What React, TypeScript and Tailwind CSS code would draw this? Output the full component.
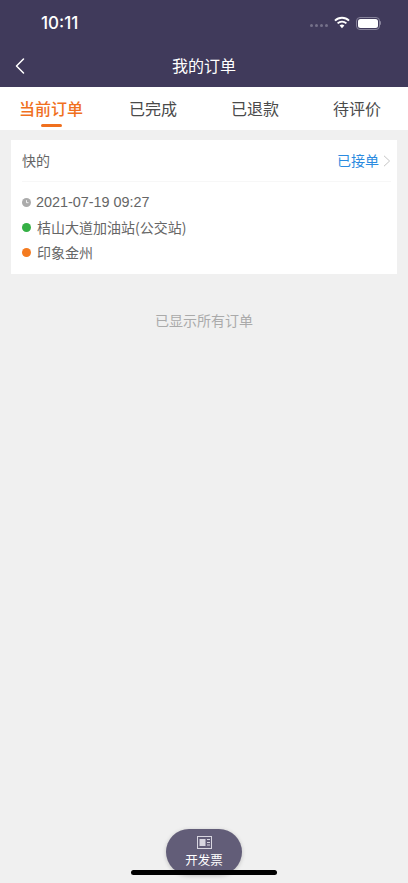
import { ChevronLeft } from 'lucide-react';

const TABS = ['当前订单', '已完成', '已退款', '待评价'];
const CJK = "font-['Noto_Sans_CJK_SC','Liberation_Sans',sans-serif]";

function StatusBar() {
  return (
    <div className="h-[47px] pl-[41px] pr-[27px] flex items-center justify-between text-white">
      <span className="text-[17px] font-medium font-['Inter',sans-serif] leading-none">10:11</span>
      <div className="flex items-center">
        <div className="flex gap-[2px] mr-[6px] mt-[3px]">
          {[0, 1, 2, 3].map(i => (
            <span key={i} className="w-[3px] h-[3px] rounded-full bg-[#75718a]" />
          ))}
        </div>
        <svg width="16" height="13" viewBox="0 0 17 13" className="mr-[6px] mb-[2px]">
          <path d="M1 4.5a10.8 10.8 0 0 1 15 0" fill="none" stroke="white" strokeWidth="2" />
          <path d="M3.8 7.4a6.8 6.8 0 0 1 9.4 0" fill="none" stroke="white" strokeWidth="2" />
          <path d="M6 9.8a3.6 3.6 0 0 1 5 0L8.5 12.6z" fill="white" />
        </svg>
        <div className="w-[24px] h-[13px] rounded-[4px] border border-[#86829a] p-[1px] mb-[1px]">
          <div className="w-full h-full rounded-[2.5px] bg-white" />
        </div>
        <span className="w-[1.5px] h-[4px] bg-[#86829a] rounded-r-sm mb-[1px]" />
      </div>
    </div>
  );
}

function Tabs() {
  return (
    <div className="h-[43px] bg-white grid grid-cols-4">
      {TABS.map((tab, i) => (
        <div key={tab} className="relative pt-[8px] text-center">
          <span className={i === 0 ? 'text-[16px] leading-[26px] font-medium text-[#f0701e] block' : 'text-[16px] leading-[26px] text-[#4a4a4a] block'}>
            {tab}
          </span>
          {i === 0 && <span className="absolute left-[41px] top-[37px] w-[21px] h-[3px] rounded-full bg-[#f0701e]" />}
        </div>
      ))}
    </div>
  );
}

function OrderCard() {
  return (
    <div className="mx-[11px] mt-[10px] bg-white">
      <div className="ml-[11px] mr-[6px] h-[42px] flex items-center justify-between border-b border-[#f7f7f7]">
        <span className="text-[14px] text-[#666666]">快的</span>
        <div className="flex items-center gap-[4px] text-[#2b8be0] text-[14px]">
          已接单
          <svg width="8" height="12" viewBox="0 0 8 12" className="mt-[1px]">
            <path d="M1 0.8 6.6 6 1 11.2" fill="none" stroke="#c4c4c4" strokeWidth="1" />
          </svg>
        </div>
      </div>
      <div className="px-[11px] pt-[7px] pb-[9px] flex flex-col text-[14px] text-[#666666]">
        <div className="h-[26px] flex items-center gap-[5px]">
          <svg width="9" height="9" viewBox="0 0 9 9">
            <circle cx="4.5" cy="4.5" r="4.5" fill="#ababab" />
            <path d="M4.5 2.2v2.5h2" fill="none" stroke="white" strokeWidth="0.8" />
          </svg>
          <span className="font-['Liberation_Sans',sans-serif] text-[14.4px] pt-[1px]">2021-07-19 09:27</span>
        </div>
        <div className="h-[25px] flex items-center gap-[6px]">
          <span className="w-[9px] h-[9px] rounded-full bg-[#35b045]" />
          <span>桔山大道加油站(公交站)</span>
        </div>
        <div className="h-[25px] flex items-center gap-[6px]">
          <span className="w-[9px] h-[9px] rounded-full bg-[#f47b20]" />
          <span>印象金州</span>
        </div>
      </div>
    </div>
  );
}

export default function App() {
  return (
    <div className={`relative w-[408px] h-[883px] overflow-hidden bg-[#f0f0f0] ${CJK}`}>
      <div className="bg-[#403a5b]">
        <StatusBar />
        <div className="relative h-[40px] pb-[4px] flex items-center justify-center text-white text-[16px]">
          <ChevronLeft size={28} strokeWidth={1.3} className="absolute left-[6px] top-[5px]" />
          我的订单
        </div>
      </div>
      <Tabs />
      <OrderCard />
      <p className="mt-[36px] text-center text-[14px] leading-[20px] text-[#aaaaaa]">已显示所有订单</p>

      <div className="absolute left-[166px] top-[829px] w-[76px] h-[46px] rounded-full bg-[#625d78] shadow-[0_1px_4px_rgba(0,0,0,0.2)] flex flex-col items-center pt-[7px]">
        <svg width="15" height="13" viewBox="0 0 15 13">
          <rect x="0.5" y="0.5" width="14" height="12" fill="none" stroke="#d8d6e0" strokeWidth="1" />
          <rect x="2.5" y="3" width="6" height="7" fill="#d8d6e0" />
          <path d="M10 3.5h3M10 6.5h3M10 9h3" stroke="#d8d6e0" strokeWidth="1" />
        </svg>
        <span className="text-white text-[12.5px] leading-[18px] mt-[2px]">开发票</span>
      </div>
      <div className="absolute left-[131px] top-[870px] w-[146px] h-[5px] rounded-full bg-black" />
    </div>
  );
}
